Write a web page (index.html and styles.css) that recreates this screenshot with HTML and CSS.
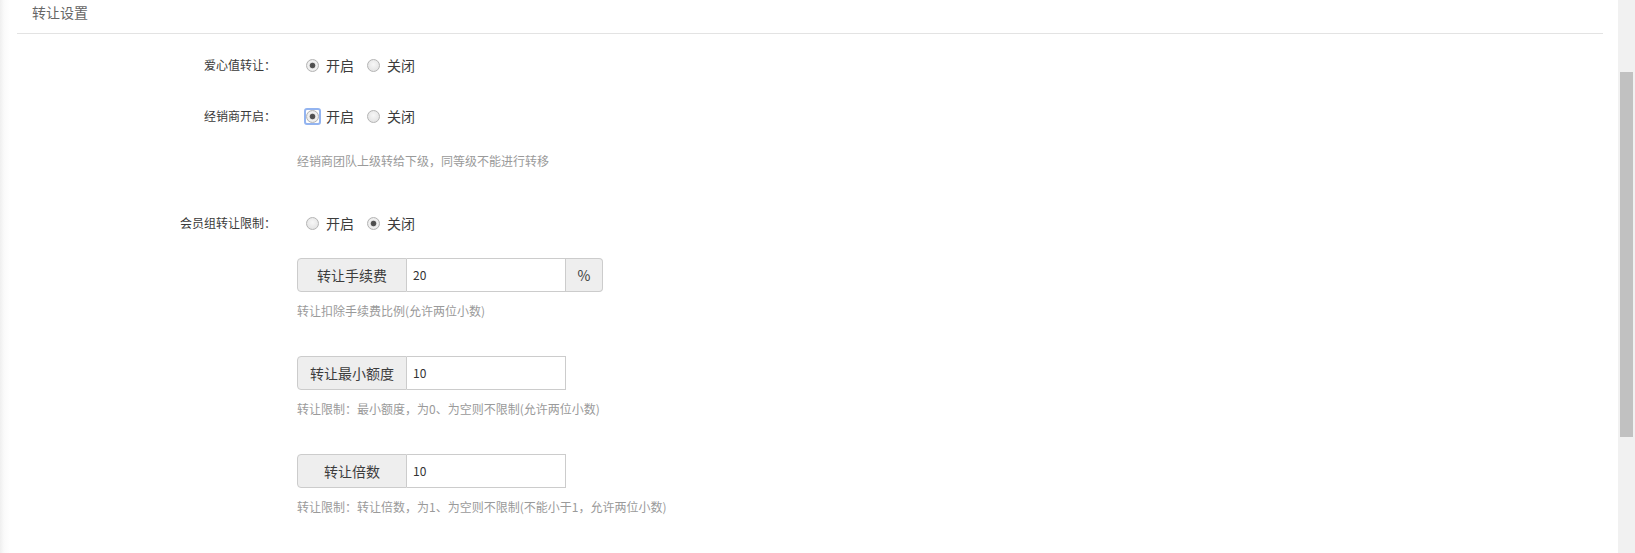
FILE: index.html
```html
<!DOCTYPE html>
<html lang="zh-CN">
<head>
<meta charset="utf-8">
<title>转让设置</title>
<link rel="stylesheet" href="styles.css">
</head>
<body>
<div class="page">
  <div class="edge"></div>
  <div class="main">
    <div class="panel">
      <div class="panel-head"><span class="title">转让设置</span></div>
      <div class="form">
        <div class="row r1">
          <div class="label">爱心值转让：</div>
          <div class="ctrl radios">
            <span class="radio checked"></span><span class="rtext">开启</span>
            <span class="radio"></span><span class="rtext">关闭</span>
          </div>
        </div>
        <div class="row r2">
          <div class="label">经销商开启：</div>
          <div class="ctrl radios">
            <span class="radio checked focus"></span><span class="rtext">开启</span>
            <span class="radio"></span><span class="rtext">关闭</span>
          </div>
        </div>
        <div class="row r-help">
          <div class="label"></div>
          <div class="ctrl help">经销商团队上级转给下级，同等级不能进行转移</div>
        </div>
        <div class="row r3">
          <div class="label">会员组转让限制：</div>
          <div class="ctrl radios">
            <span class="radio"></span><span class="rtext">开启</span>
            <span class="radio checked"></span><span class="rtext">关闭</span>
          </div>
        </div>
        <div class="row group-row g1">
          <div class="label"></div>
          <div class="ctrl">
            <div class="igroup">
              <span class="addon">转让手续费</span>
              <span class="ivalue">20</span>
              <span class="addon addon-end">%</span>
            </div>
            <div class="help help-g">转让扣除手续费比例(允许两位小数)</div>
          </div>
        </div>
        <div class="row group-row">
          <div class="label"></div>
          <div class="ctrl">
            <div class="igroup">
              <span class="addon">转让最小额度</span>
              <span class="ivalue">10</span>
            </div>
            <div class="help help-g">转让限制：最小额度，为0、为空则不限制(允许两位小数)</div>
          </div>
        </div>
        <div class="row group-row">
          <div class="label"></div>
          <div class="ctrl">
            <div class="igroup">
              <span class="addon">转让倍数</span>
              <span class="ivalue">10</span>
            </div>
            <div class="help help-g">转让限制：转让倍数，为1、为空则不限制(不能小于1，允许两位小数)</div>
          </div>
        </div>
      </div>
    </div>
  </div>
  <div class="scrollbar"><div class="thumb"></div></div>
</div>
</body>
</html>
```
FILE: styles.css
```css
* { box-sizing: border-box; }
html, body { margin: 0; padding: 0; }
body {
  font-family: "Noto Sans CJK SC", "Liberation Sans", sans-serif;
  color: #333;
  background: #fff;
}
.page {
  display: flex;
  width: 1635px;
  height: 553px;
  overflow: hidden;
}
.edge {
  width: 10px;
  flex: none;
  background: linear-gradient(to right, #efefef, #fafafa 40%, #fff);
}
.main {
  flex: 1;
  padding: 0 15px 0 7px;
  background: #fff;
}
.panel-head {
  display: flex;
  height: 34px;
  padding: 0;
  font-size: 14px;
  line-height: 25px;
  color: #666;
  border-bottom: 1px solid #e3e3e3;
}
.title {
  display: block;
  margin-left: 15px;
}
.row {
  display: grid;
  grid-template-columns: 263px 1fr;
  column-gap: 17px;
}
.label {
  text-align: right;
  padding-right: 4px;
  font-size: 12px;
  line-height: 20px;
  color: #3a3a3a;
}
.r1 { margin-top: 21px; }
.r2 { margin-top: 31px; }
.r-help { margin-top: 26px; }
.r3 { margin-top: 43px; }
.g1 { margin-top: 25px !important; }
.group-row { margin-top: 36px; }
.radios {
  display: flex;
  align-items: center;
  height: 20px;
}
.radio {
  position: relative;
  width: 13px;
  height: 13px;
  border-radius: 50%;
  border: 1px solid #b4b4b4;
  background: radial-gradient(circle at 50% 40%, #f7f7f7, #dedede);
  margin-left: 9px;
  flex: none;
}
.radio + .rtext + .radio { margin-left: 13px; }
.radio.checked {
  background: radial-gradient(circle, #4a4a4a 0, #555 2.4px, #e4e4e4 3.2px, #f2f2f2 4.2px, #d8d8d8 100%);
}
.radio.focus::after {
  content: "";
  position: absolute;
  left: -3px;
  top: -3px;
  right: -3px;
  bottom: -3px;
  border: 2px solid #93b4f0;
  border-radius: 3px;
}
.rtext {
  font-size: 14px;
  line-height: 20px;
  margin-left: 7px;
  color: #3c3c3c;
}
.help {
  font-size: 12px;
  line-height: 18px;
  color: #9a9a9a;
}
.help-g { margin-top: 10px; }
.igroup {
  display: flex;
  height: 34px;
  width: max-content;
}
.addon {
  width: 110px;
  border: 1px solid #ccc;
  background: #eee;
  border-radius: 4px 0 0 4px;
  font-size: 14px;
  line-height: 32px;
  text-align: center;
  color: #3c3c3c;
}
.addon-end {
  width: 37px;
  border-left: 0;
  border-radius: 0 4px 4px 0;
  font-size: 14px;
}
.ivalue {
  width: 159px;
  border: 1px solid #ccc;
  border-left: 0;
  font-size: 12px;
  line-height: 32px;
  padding-left: 6px;
  color: #333;
  background: #fff;
}
.scrollbar {
  width: 17px;
  flex: none;
  background: #f1f1f1;
  padding: 72px 2px 0;
}
.thumb {
  height: 365px;
  background: #c1c1c1;
}
```
